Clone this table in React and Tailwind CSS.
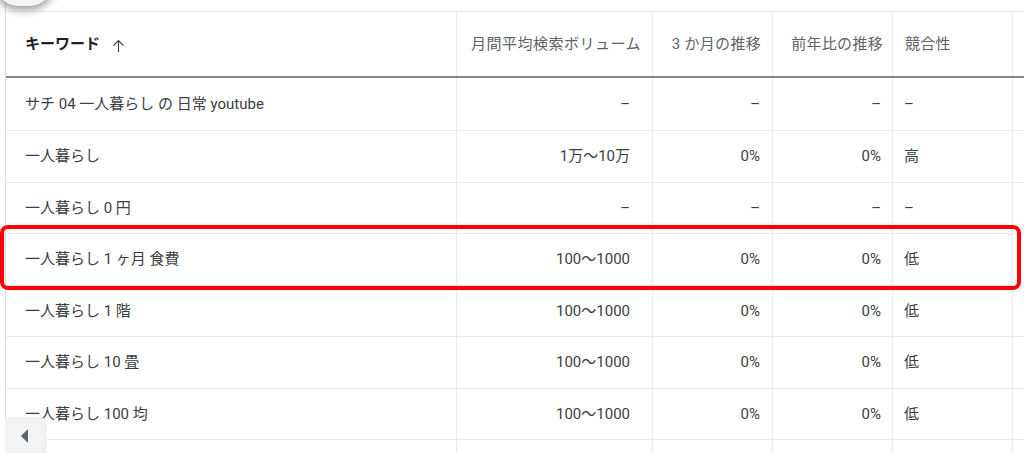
import React from "react"

const rows = [
    { kw: "サチ 04 一人暮らし の 日常 youtube", vol: "–", m3: "–", yoy: "–", comp: "–" },
    { kw: "一人暮らし", vol: "1万～10万", m3: "0%", yoy: "0%", comp: "高" },
    { kw: "一人暮らし 0 円", vol: "–", m3: "–", yoy: "–", comp: "–" },
    { kw: "一人暮らし 1 ヶ月 食費", vol: "100～1000", m3: "0%", yoy: "0%", comp: "低" },
    { kw: "一人暮らし 1 階", vol: "100～1000", m3: "0%", yoy: "0%", comp: "低" },
    { kw: "一人暮らし 10 畳", vol: "100～1000", m3: "0%", yoy: "0%", comp: "低" },
    { kw: "一人暮らし 100 均", vol: "100～1000", m3: "0%", yoy: "0%", comp: "低" },
    // next row is scrolled below the fold, only its grid lines show
    { kw: "", vol: "", m3: "", yoy: "", comp: "" },
]

const heights = ["h-[53px]", "h-[52px]", "h-[51px]", "h-[52px]", "h-[51px]", "h-[52px]", "h-[51px]", "h-[52px]"]

const cols = "grid grid-cols-[451px_196px_120px_120px_120px_1fr]"
const cell = "flex items-center border-r border-[#e8eaed] h-full whitespace-nowrap"

export default function App() {
    return (
        <div className="relative w-[1024px] h-[453px] overflow-hidden bg-white text-[15px] text-[#3c4043]" style={{ fontFamily: 'Roboto, "Noto Sans CJK JP", sans-serif' }}>
            {/* shadow blob from a button above */}
            <div className="absolute -top-[44px] left-[-6px] w-[60px] h-[50px] rounded-full bg-[#f4f4f4] shadow-[0_3px_10px_rgba(0,0,0,0.45)]" />

            <div className="pl-[5px]">
                <div className="border-l border-[#dadce0]">
                    <div className="h-[12px] border-b border-[#e8eaed]" />

                    <div className={`${cols} h-[66px] border-b-2 border-[#80868b]`}>
                        <div className={`${cell} pl-[19px] gap-[10px] font-bold text-[#202124]`}>
                            キーワード
                            <svg width="17" height="17" viewBox="0 0 24 24" className="mt-[3px]">
                                <path d="M12 5v16M5 12l7-7 7 7" fill="none" stroke="#3c4043" strokeWidth="1.6" />
                            </svg>
                        </div>
                        <div className={`${cell} justify-end pr-[11px] tracking-[0.5px] text-[#5f6368]`}>月間平均検索ボリューム</div>
                        <div className={`${cell} justify-end pr-[11px] tracking-[0.3px] text-[#5f6368]`}>3 か月の推移</div>
                        <div className={`${cell} justify-end pr-[9px] tracking-[0.3px] text-[#5f6368]`}>前年比の推移</div>
                        <div className={`${cell} pl-[12px] tracking-[0.3px] text-[#5f6368]`}>競合性</div>
                        <div />
                    </div>

                    {rows.map((r, i) => (
                        <div key={i} className={`${cols} ${heights[i]} border-b border-[#e8eaed]`}>
                            <div className={`${cell} pl-[19px]`}>{r.kw}</div>
                            <div className={`${cell} justify-end pr-[22px]`}>{r.vol}</div>
                            <div className={`${cell} justify-end pr-[12px]`}>{r.m3}</div>
                            <div className={`${cell} justify-end pr-[11px]`}>{r.yoy}</div>
                            <div className={`${cell} pl-[11px]`}>{r.comp}</div>
                            <div />
                        </div>
                    ))}
                </div>
            </div>

            {/* highlight */}
            <div className="absolute left-0 top-[225px] w-[1021px] h-[65px] border-4 border-[#ff0000] rounded-[8px]" />

            {/* horizontal scroll button */}
            <div className="absolute left-[5px] top-[418px] w-[41px] h-[35px] bg-[#f1f3f4] border-t border-r border-[#e8eaed] flex items-center justify-center">
                <svg width="10" height="16" viewBox="0 0 10 16">
                    <path d="M8 1 L1 8 L8 15 Z" fill="#5f6368" />
                </svg>
            </div>
        </div>
    )
}
